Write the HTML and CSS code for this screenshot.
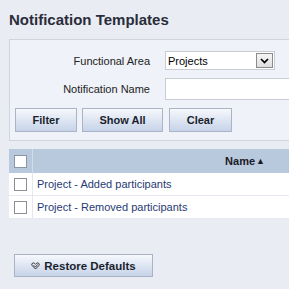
FILE: index.html
```html
<!DOCTYPE html>
<html>
<head>
<meta charset="utf-8">
<link rel="stylesheet" href="styles.css">
</head>
<body>
<div class="page">
  <h1 class="title">Notification Templates</h1>
  <div class="panel">
    <div class="field field-select">
      <label class="label">Functional Area</label>
      <div class="select"><span class="select-text">Projects</span><span class="select-arrow"><svg width="9" height="6" viewBox="0 0 9 6"><path d="M1 1 L4.5 4.5 L8 1" fill="none" stroke="#000" stroke-width="1.7"/></svg></span></div>
    </div>
    <div class="field field-input">
      <label class="label">Notification Name</label>
      <div class="input"></div>
    </div>
    <div class="buttons">
      <button class="btn btn-filter">Filter</button>
      <button class="btn btn-show">Show All</button>
      <button class="btn btn-clear">Clear</button>
    </div>
  </div>
  <div class="table">
    <div class="row head">
      <div class="cell-check"><span class="check white"></span></div>
      <div class="cell-name head-name">Name<span class="sort">&#9650;</span></div>
    </div>
    <div class="row">
      <div class="cell-check"><span class="check"></span></div>
      <div class="cell-name"><a class="link">Project - Added participants</a></div>
    </div>
    <div class="row">
      <div class="cell-check"><span class="check"></span></div>
      <div class="cell-name"><a class="link">Project - Removed participants</a></div>
    </div>
  </div>
  <div class="footer">
    <button class="btn btn-restore"><svg class="restore-icon" width="9" height="8" viewBox="0 0 9 8"><path d="M4.5 7 L1.2 3.6 Q0.3 2.4 1.2 1.4 Q2.4 0.4 3.6 1.4 L4.5 2.3 L5.4 1.4 Q6.6 0.4 7.8 1.4 Q8.7 2.4 7.8 3.6 Z" fill="none" stroke="#333" stroke-width="1"/><path d="M2.6 3.2 L4.4 5 L6.6 2.4" fill="none" stroke="#333" stroke-width="0.9"/></svg>Restore Defaults</button>
  </div>
</div>
</body>
</html>
```

FILE: styles.css
```css
html, body {
  margin: 0;
  padding: 0;
  background: #e9ecf3;
}
.page {
  width: 289px;
  height: 289px;
  overflow: hidden;
  font-family: "Liberation Sans", Arial, sans-serif;
  padding: 11px 0 0 9px;
  box-sizing: border-box;
}
.title {
  margin: 0 0 10px 0;
  font-family: "Liberation Sans", Arial, sans-serif;
  font-size: 15px;
  font-weight: bold;
  color: #2a2c3a;
  height: 18px;
  line-height: 18px;
}
.panel {
  border: 1px solid #cfd4de;
  border-right: none;
  background: #eff2f8;
  width: 290px;
  padding: 11px 0 8px 5px;
  box-sizing: border-box;
}
.field {
  display: flex;
  align-items: center;
  margin-left: -5px;
}
.field-select {
  height: 19px;
  margin-bottom: 8px;
}
.field-input {
  height: 22px;
  margin-bottom: 8px;
}
.label {
  width: 140px;
  margin-right: 15px;
  text-align: right;
  font-size: 11px;
  color: #222;
}
.select {
  width: 110px;
  height: 19px;
  border: 1px solid #c9ccd2;
  background: #fff;
  box-sizing: border-box;
  display: flex;
  align-items: center;
  justify-content: space-between;
}
.select-text {
  font-size: 11px;
  color: #000;
  padding-left: 2px;
}
.select-arrow {
  width: 17px;
  height: 15px;
  margin-right: 1px;
  border: 1px solid #8a8a8a;
  background: linear-gradient(#f6f6f6, #dedede);
  box-sizing: border-box;
  display: flex;
  align-items: center;
  justify-content: center;
}
.input {
  width: 130px;
  height: 22px;
  border: 1px solid #c9ccd2;
  border-right: none;
  background: #fff;
  box-sizing: border-box;
}
.buttons {
  display: flex;
  gap: 5px;
}
.btn {
  height: 24px;
  border: 1px solid #aab4c6;
  background: linear-gradient(#f6f8fc, #c6d3e8);
  font-family: "Liberation Sans", Arial, sans-serif;
  font-size: 11px;
  font-weight: bold;
  color: #1a1f2e;
  padding: 0;
  box-sizing: border-box;
}
.btn-filter { width: 62px; }
.btn-show { width: 81px; }
.btn-clear { width: 63px; margin-left: 1px; }
.table {
  margin-top: 8px;
  width: 280px;
  background: #fff;
}
.row {
  display: flex;
  height: 23px;
  border-bottom: 1px solid #e6e9ef;
  box-sizing: border-box;
}
.row.head {
  height: 24px;
  background: #b8c8dd;
  border-bottom: none;
}
.cell-check {
  width: 24px;
  border-right: 1px solid #e4e7ee;
  display: flex;
  align-items: center;
  justify-content: center;
  box-sizing: border-box;
}
.head .cell-check {
  border-right: 1px solid #d3dce8;
}
.check {
  width: 13px;
  height: 13px;
  border: 1px solid #8a8f98;
  background: #fff;
  box-sizing: border-box;
}
.check.white {
  border-color: #8a96a8;
}
.cell-name {
  flex: 1;
  display: flex;
  align-items: center;
  padding-left: 4px;
}
.head-name {
  justify-content: flex-end;
  padding-right: 24px;
  font-weight: bold;
  font-size: 11px;
  color: #1a1a28;
}
.sort {
  font-size: 9px;
  margin-left: 1px;
}
.link {
  font-size: 11px;
  color: #1f3b74;
  text-decoration: none;
}
.footer {
  padding: 35px 0 0 5px;
}
.btn-restore {
  width: 139px;
  height: 23px;
  display: flex;
  align-items: center;
  justify-content: center;
  gap: 4px;
  font-size: 11.5px;
}
.restore-icon {
  display: block;
}
```
